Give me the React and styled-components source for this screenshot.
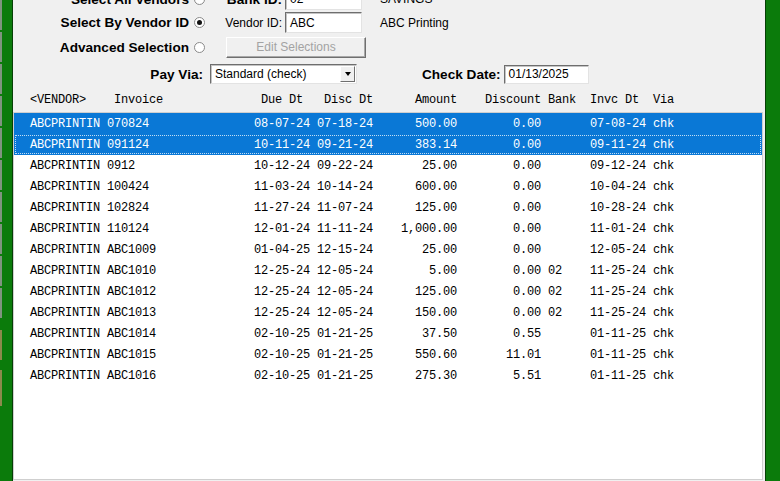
import React from "react";
import styled, { createGlobalStyle } from "styled-components";

const Global = createGlobalStyle`
  html, body { margin: 0; padding: 0; overflow: hidden; }
  body { font-family: "Liberation Sans", Arial, sans-serif; }
`;

const Screen = styled.div`
  display: flex;
  width: 780px;
  height: 481px;
  overflow: hidden;
`;

const LeftRail = styled.div`
  width: 12px;
  flex: none;
  background: #0b7b0b;
  border-right: 1px solid #063f06;
  display: flex;
  flex-direction: column;
  gap: 2px;
`;

const Stub = styled.div`
  width: 2px;
  height: ${(p) => p.$h}px;
  margin-top: ${(p) => p.$top || 0}px;
  background: ${(p) => (p.$tone === "olive" ? "#8c8a4c" : "#7f947f")};
`;

const RightRail = styled.div`
  width: 14px;
  flex: none;
  background: #0b7b0b;
  border-left: 1px solid #063f06;
`;

const Panel = styled.div`
  flex: 1;
  min-width: 0;
  background: #f0f0f0;
  display: flex;
  flex-direction: column;
  overflow: hidden;
`;

const Form = styled.div`
  margin-top: -13px;
  display: grid;
  grid-template-rows: 24px 23px 26px 28px;
`;

const FormRow = styled.div`
  display: flex;
  align-items: center;
`;

const ChoiceCell = styled.div`
  width: ${(p) => p.$w || 195}px;
  flex: none;
  display: flex;
  justify-content: flex-end;
  align-items: center;
  gap: 5px;
  padding-right: ${(p) => p.$pr ?? 3}px;
  box-sizing: border-box;
`;

const BoldLabel = styled.span`
  font-family: "Liberation Sans", Arial, sans-serif;
  font-weight: bold;
  font-size: 13.6px;
  color: #000;
  white-space: nowrap;
  margin-left: ${(p) => p.$ml || 0}px;
`;

const Radio = styled.span`
  width: 11px;
  height: 11px;
  box-sizing: border-box;
  border-radius: 50%;
  border: 1px solid #8a8a8a;
  background: #fff;
  display: inline-flex;
  align-items: center;
  justify-content: center;
  flex: none;
  &::after {
    content: "";
    width: 5px;
    height: 5px;
    border-radius: 50%;
    background: ${(p) => (p.$on ? "#111" : "transparent")};
  }
`;

const FieldCell = styled.div`
  width: 144px;
  margin-left: 14px;
  flex: none;
  display: flex;
  align-items: center;
  gap: 3px;
`;

const FieldLabel = styled.span`
  width: 60px;
  text-align: right;
  white-space: nowrap;
  font-family: "Liberation Sans", Arial, sans-serif;
  font-size: ${(p) => (p.$bold ? "13.6px" : "12px")};
  font-weight: ${(p) => (p.$bold ? "bold" : "normal")};
  color: #000;
`;

const TextBox = styled.div`
  width: ${(p) => p.$w}px;
  height: ${(p) => p.$h || 21}px;
  margin-left: ${(p) => p.$ml || 0}px;
  box-sizing: border-box;
  background: #fff;
  border: 1px solid;
  border-color: #6e6e6e #e3e3e3 #e3e3e3 #6e6e6e;
  box-shadow: inset 1px 1px 0 #c4c4c4;
  display: flex;
  align-items: center;
  padding-left: 4px;
  font-family: "Liberation Sans", Arial, sans-serif;
  font-size: 12px;
  color: #000;
  flex: none;
  white-space: nowrap;
  overflow: hidden;
`;

const FlatButton = styled.div`
  width: 140px;
  height: 21px;
  margin-left: 4px;
  box-sizing: border-box;
  background: #f0f0f0;
  border: 1px solid;
  border-color: #ffffff #6f6f6f #6f6f6f #ffffff;
  box-shadow: inset -1px -1px 0 #a8a8a8;
  display: flex;
  align-items: center;
  justify-content: center;
  font-family: "Liberation Sans", Arial, sans-serif;
  font-size: 12px;
  color: #a3a3a3;
`;

const InfoText = styled.span`
  margin-left: 14px;
  font-family: "Liberation Sans", Arial, sans-serif;
  font-size: 12px;
  color: #000;
  white-space: nowrap;
`;

const Select = styled(TextBox)`
  justify-content: space-between;
  padding-right: 1px;
`;

const DropButton = styled.span`
  width: 15px;
  height: 16px;
  box-sizing: border-box;
  background: #f0f0f0;
  border: 1px solid;
  border-color: #ffffff #6f6f6f #6f6f6f #ffffff;
  display: flex;
  align-items: center;
  justify-content: center;
  &::after {
    content: "";
    border-left: 3.5px solid transparent;
    border-right: 3.5px solid transparent;
    border-top: 4px solid #000;
  }
`;

const MONO = `"Liberation Mono", "Courier New", monospace`;
const COLS = "77px 147px 63px 63px 77px 84px 49px 63px 1fr";

const HeaderRow = styled.div`
  height: 24px;
  display: grid;
  grid-template-columns: ${COLS};
  align-items: center;
  padding-left: 17px;
  font-family: ${MONO};
  font-size: 12px;
  letter-spacing: -0.2px;
  color: #000;
`;

const ListBox = styled.div`
  flex: 1;
  margin: 0 2px 1px 0;
  background: #fff;
  border: 1px solid #cfcfcf;
  display: flex;
  flex-direction: column;
  overflow: hidden;
`;

const ItemRow = styled.div`
  height: 21px;
  flex: none;
  display: grid;
  grid-template-columns: ${COLS};
  align-items: center;
  padding-left: 16px;
  padding-top: 1px;
  box-sizing: border-box;
  font-family: ${MONO};
  font-size: 12px;
  letter-spacing: -0.2px;
  background: ${(p) => (p.$selected ? "#0a78d6" : "transparent")};
  color: ${(p) => (p.$selected ? "#fff" : "#000")};
  outline: ${(p) => (p.$focused ? "1px dotted rgba(255,255,255,0.75)" : "none")};
  outline-offset: -2px;
`;

const Cell = styled.span`
  white-space: pre;
  text-align: ${(p) => p.$align || "left"};
  padding-left: ${(p) => (p.$indent ? 7 : 0)}px;
`;

const rows = [
  ["070824", "08-07-24", "07-18-24", "500.00", "0.00", "", "07-08-24"],
  ["091124", "10-11-24", "09-21-24", "383.14", "0.00", "", "09-11-24"],
  ["0912", "10-12-24", "09-22-24", "25.00", "0.00", "", "09-12-24"],
  ["100424", "11-03-24", "10-14-24", "600.00", "0.00", "", "10-04-24"],
  ["102824", "11-27-24", "11-07-24", "125.00", "0.00", "", "10-28-24"],
  ["110124", "12-01-24", "11-11-24", "1,000.00", "0.00", "", "11-01-24"],
  ["ABC1009", "01-04-25", "12-15-24", "25.00", "0.00", "", "12-05-24"],
  ["ABC1010", "12-25-24", "12-05-24", "5.00", "0.00", "02", "11-25-24"],
  ["ABC1012", "12-25-24", "12-05-24", "125.00", "0.00", "02", "11-25-24"],
  ["ABC1013", "12-25-24", "12-05-24", "150.00", "0.00", "02", "11-25-24"],
  ["ABC1014", "02-10-25", "01-21-25", "37.50", "0.55", "", "01-11-25"],
  ["ABC1015", "02-10-25", "01-21-25", "550.60", "11.01", "", "01-11-25"],
  ["ABC1016", "02-10-25", "01-21-25", "275.30", "5.51", "", "01-11-25"],
];

const stubs = [
  ...Array.from({ length: 10 }, () => ({ h: 30, tone: "gray" })),
  { h: 30, tone: "olive", top: 10 },
  { h: 36, tone: "olive", top: 8 },
];

export default function App() {
  return (
    <>
      <Global />
      <Screen>
        <LeftRail>
          {stubs.map((s, i) => (
            <Stub key={i} $h={s.h} $tone={s.tone} $top={s.top} />
          ))}
        </LeftRail>
        <Panel>
          <Form>
            <FormRow>
              <ChoiceCell>
                <BoldLabel>Select All Vendors</BoldLabel>
                <Radio />
              </ChoiceCell>
              <FieldCell>
                <FieldLabel $bold>Bank ID:</FieldLabel>
                <TextBox $w={77}>02</TextBox>
              </FieldCell>
              <InfoText>SAVINGS</InfoText>
            </FormRow>
            <FormRow>
              <ChoiceCell>
                <BoldLabel>Select By Vendor ID</BoldLabel>
                <Radio $on />
              </ChoiceCell>
              <FieldCell>
                <FieldLabel>Vendor ID:</FieldLabel>
                <TextBox $w={77}>ABC</TextBox>
              </FieldCell>
              <InfoText>ABC Printing</InfoText>
            </FormRow>
            <FormRow>
              <ChoiceCell>
                <BoldLabel>Advanced Selection</BoldLabel>
                <Radio />
              </ChoiceCell>
              <FieldCell>
                <FlatButton>Edit Selections</FlatButton>
              </FieldCell>
            </FormRow>
            <FormRow>
              <ChoiceCell $w={190} $pr={0}>
                <BoldLabel>Pay Via:</BoldLabel>
              </ChoiceCell>
              <Select $w={147} $h={20} $ml={7}>
                <span>Standard (check)</span>
                <DropButton />
              </Select>
              <BoldLabel $ml={65}>Check Date:</BoldLabel>
              <TextBox $w={85} $h={19} $ml={3}>
                01/13/2025
              </TextBox>
            </FormRow>
          </Form>
          <HeaderRow>
            <Cell>{"<VENDOR>"}</Cell>
            <Cell $indent>Invoice</Cell>
            <Cell $indent>Due Dt</Cell>
            <Cell $indent>Disc Dt</Cell>
            <Cell $align="right">Amount</Cell>
            <Cell $align="right">Discount</Cell>
            <Cell $indent>Bank</Cell>
            <Cell>Invc Dt</Cell>
            <Cell>Via</Cell>
          </HeaderRow>
          <ListBox>
            {rows.map((r, i) => (
              <ItemRow key={r[0]} $selected={i < 2} $focused={i === 1}>
                <Cell>ABCPRINTIN</Cell>
                <Cell>{r[0]}</Cell>
                <Cell>{r[1]}</Cell>
                <Cell>{r[2]}</Cell>
                <Cell $align="right">{r[3]}</Cell>
                <Cell $align="right">{r[4]}</Cell>
                <Cell $indent>{r[5]}</Cell>
                <Cell>{r[6]}</Cell>
                <Cell>chk</Cell>
              </ItemRow>
            ))}
          </ListBox>
        </Panel>
        <RightRail />
      </Screen>
    </>
  );
}
